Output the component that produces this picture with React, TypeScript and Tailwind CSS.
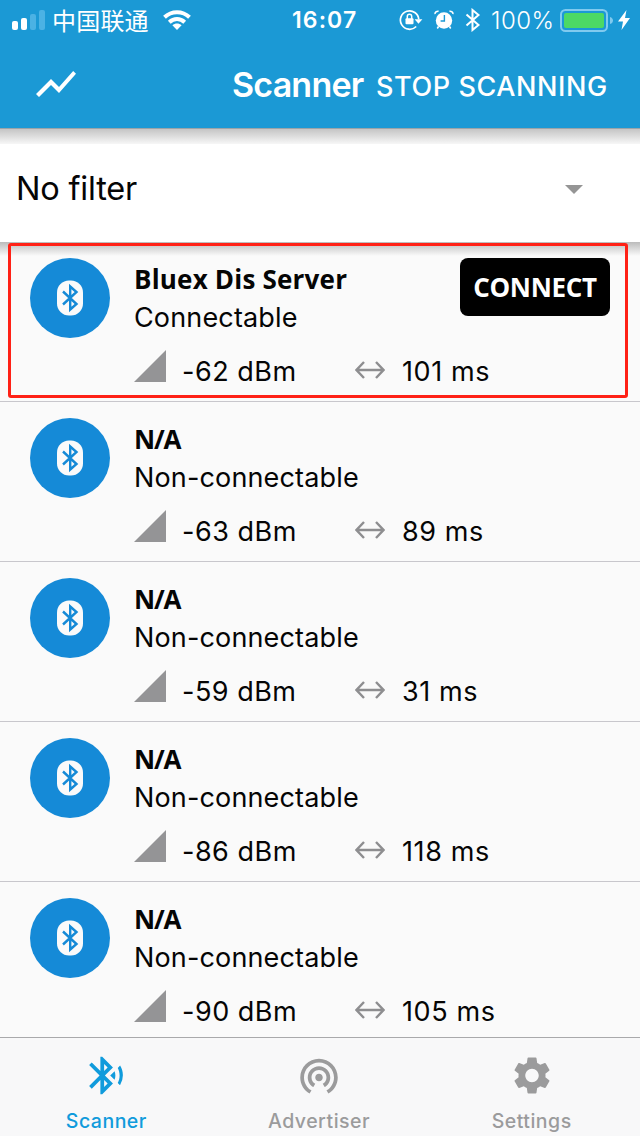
import type { ReactNode } from "react";
import { MdShowChart, MdBluetoothAudio, MdWifiTethering, MdSettings } from "react-icons/md";

type Device = { name: string; status: string; rssi: string; interval: string; connectable?: boolean };

const devices: Device[] = [
  { name: "Bluex Dis Server", status: "Connectable", rssi: "-62 dBm", interval: "101 ms", connectable: true },
  { name: "N/A", status: "Non-connectable", rssi: "-63 dBm", interval: "89 ms" },
  { name: "N/A", status: "Non-connectable", rssi: "-59 dBm", interval: "31 ms" },
  { name: "N/A", status: "Non-connectable", rssi: "-86 dBm", interval: "118 ms" },
  { name: "N/A", status: "Non-connectable", rssi: "-90 dBm", interval: "105 ms" },
];

function StatusBar() {
  return (
    <div className="flex h-10 items-center text-white">
      <svg className="ml-3 h-5 w-[33px] shrink-0" viewBox="0 0 33 20">
        <rect x="0" y="11" width="6" height="9" rx="2" fill="#fff" />
        <rect x="9" y="8" width="6" height="12" rx="2" fill="#fff" />
        <rect x="18" y="4" width="6" height="16" rx="2" fill="#4bb2e4" />
        <rect x="27" y="0" width="6" height="20" rx="2" fill="#4bb2e4" />
      </svg>
      <span className="ml-[7px] w-[97px] whitespace-nowrap font-['Noto_Sans_CJK_SC',sans-serif] text-2xl leading-10 tracking-[0.2px]">中国联通</span>
      <svg className="ml-[14px] h-[22px] w-7 shrink-0" viewBox="0 0 28 22" fill="none" stroke="#fff" strokeWidth="4">
        <path d="M1.5 8.2C8.5 1.5 19.5 1.5 26.5 8.2" />
        <path d="M6.3 13.2C10.8 9 17.2 9 21.7 13.2" />
        <path d="M14 21l-4.6-4.7c2.7-2.3 6.5-2.3 9.2 0z" fill="#fff" stroke="none" />
      </svg>
      <span className="ml-[101px] w-[70px] whitespace-nowrap text-[23px] font-semibold leading-10 tracking-[1.1px]">16:07</span>
      <svg className="ml-[37px] h-[22px] w-6 shrink-0" viewBox="0 0 24 22" fill="none" stroke="#fff" strokeWidth="1.7">
        <path d="M19.8 10.5A9.2 9.2 0 1 0 17.2 17.5" />
        <path d="M15.6 10.3h7.8l-3.900 4.500z" fill="#fff" stroke="none" />
        <rect x="6.5" y="9.3" width="8" height="6" rx="1" fill="#fff" stroke="none" />
        <path d="M8.3 10V7.5a2.2 2.2 0 0 1 4.400 0V10" strokeWidth="1.5" />
      </svg>
      <svg className="ml-[11px] h-[22px] w-5 shrink-0" viewBox="0 0 20 22" fill="none">
        <circle cx="10" cy="11.5" r="8.2" fill="#fff" />
        <path d="M10.400 6v6H6.600" stroke="#1b99d5" strokeWidth="1.4" />
        <path d="M1 5.2C.8 3.5 2.6 1.8 4.600 2.200M19 5.200C19.200 3.500 17.400 1.800 15.400 2.200M4.500 17.500L3.300 19.500M15.500 17.500L16.700 19.500" stroke="#fff" strokeWidth="1.5" />
      </svg>
      <svg className="ml-[11px] h-6 w-4 shrink-0" viewBox="0 0 16 24" fill="none" stroke="#fff" strokeWidth="2">
        <path d="M1.500 6.500L13.500 17L7.500 22V2L13.500 7L1.500 17.500" />
      </svg>
      <span className="ml-[10px] w-[64px] whitespace-nowrap pt-0.5 text-[24px] font-light leading-[38px] tracking-[0.5px]">100%</span>
      <svg className="ml-[5px] h-6 w-[53px] shrink-0" viewBox="0 0 53 24">
        <rect x="1" y="2" width="46" height="21" rx="4.500" fill="none" stroke="#80caef" strokeWidth="2" />
        <rect x="4" y="5" width="40" height="15" rx="2" fill="#4cd964" />
        <path d="M50 9c4 1 4 6 0 7z" fill="#80caef" />
      </svg>
      <svg className="ml-[5px] h-5 w-3 shrink-0" viewBox="0 0 12 20" fill="#fff">
        <path d="M8.500 0L0 11.500h5L3.500 20L12 8H7z" />
      </svg>
    </div>
  );
}

function DeviceBadge() {
  return (
    <div className="ml-[30px] mt-4 flex size-20 shrink-0 items-center justify-center rounded-full bg-[#158ad7]">
      <svg className="h-9 w-[26px]" viewBox="0 0 26 36">
        <rect x="0" y="0.5" width="26" height="35" rx="12" fill="#fafafa" />
        <path d="M6 11.500L19.500 24L13.200 29.500V6.500L19.500 12L6 24.500" fill="none" stroke="#158ad7" strokeWidth="2.4" />
      </svg>
    </div>
  );
}

function DeviceRow({ device }: { device: Device }) {
  return (
    <div className="relative flex h-40 shrink-0 border-b border-[#c8c7cc]">
      <DeviceBadge />
      <div className="ml-6 flex flex-col pt-[19px]">
        <span className={`h-[37px] whitespace-nowrap font-['Open_Sans',sans-serif] text-[26px] font-bold leading-9 ${device.connectable ? "tracking-[0.2px]" : "tracking-[-1.2px]"}`}>{device.name}</span>
        <span className="h-10 whitespace-nowrap text-[27px] leading-10 tracking-[0.15px]">{device.status}</span>
        <div className="mt-3 flex h-[44px] items-center">
          <svg className="mb-[13px] size-8" viewBox="0 0 32 32"><path d="M32 0v32H0z" fill="#949496" /></svg>
          <span className="ml-4 w-[173px] whitespace-nowrap text-[27px] tracking-[0.5px]">{device.rssi}</span>
          <svg className="mb-[5px] h-5 w-[30px]" viewBox="0 0 30 20" fill="none" stroke="#8e8e90" strokeWidth="2.4">
            <path d="M1.500 10h27M9 2L1.500 10L9 18M21 2l7.500 8L21 18" />
          </svg>
          <span className="ml-[17px] whitespace-nowrap text-[27px] tracking-[0.6px]">{device.interval}</span>
        </div>
      </div>
      {device.connectable && (
        <>
          <button className="absolute right-[30px] top-4 h-[58px] w-[150px] whitespace-nowrap rounded-lg bg-black font-['Open_Sans',sans-serif] text-[26px] font-bold tracking-[-0.3px] text-white">CONNECT</button>
          <div className="absolute left-2 top-px h-[155px] w-[620px] rounded-[3px] border-3 border-[#ff2116]" />
        </>
      )}
    </div>
  );
}

function Tab({ icon, label, active }: { icon: ReactNode; label: string; active?: boolean }) {
  return (
    <div className={`flex flex-1 flex-col items-center pt-[15px] ${active ? "text-[#109bdc]" : "text-[#9b9b9c]"}`}>
      {icon}
      <span className="mt-2 text-[19.5px] font-medium leading-[30px] tracking-[0.5px]">{label}</span>
    </div>
  );
}

export default function App() {
  return (
    <div className="flex h-[1136px] w-[640px] flex-col overflow-hidden bg-[#fafafa] font-['Inter',sans-serif] text-[#050505]">
      <header className="h-32 shrink-0 bg-[#1b99d5] text-white">
        <StatusBar />
        <div className="flex h-[88px] items-center">
          <MdShowChart className="ml-8 size-12" />
          <span className="ml-[152px] w-[132px] whitespace-nowrap text-[34px] font-semibold tracking-[-0.8px]">Scanner</span>
          <span className="ml-3 mt-1.5 whitespace-nowrap text-[27px] font-medium tracking-[0.6px]">STOP SCANNING</span>
        </div>
      </header>
      <div className="h-4 shrink-0 border-t border-[#9aa4a9] bg-linear-to-b from-[#c5c5c5] to-[#f7f7f7]" />
      <div className="flex h-[98px] shrink-0 items-center justify-between bg-white pl-4 pr-[57px]">
        <span className="mt-[-8px] text-[32.5px] tracking-[-0.2px]">No filter</span>
        <svg className="mt-[-8px] h-[9px] w-[18px]" viewBox="0 0 18 9"><path d="M0 0h18l-9 9z" fill="#959595" /></svg>
      </div>
      <main className="flex min-h-0 flex-1 flex-col overflow-hidden bg-[linear-gradient(#bbbbbb,#fafafa_14px)]">
        {devices.map((device, index) => <DeviceRow key={index} device={device} />)}
      </main>
      <nav className="flex h-[99px] shrink-0 border-t border-[#a9a9ab] bg-[#f8f8f9] pr-[2px]">
        <Tab icon={<MdBluetoothAudio className="size-12" />} label="Scanner" active />
        <Tab icon={<MdWifiTethering className="size-12" />} label="Advertiser" />
        <Tab icon={<MdSettings className="size-12" />} label="Settings" />
      </nav>
    </div>
  );
}
